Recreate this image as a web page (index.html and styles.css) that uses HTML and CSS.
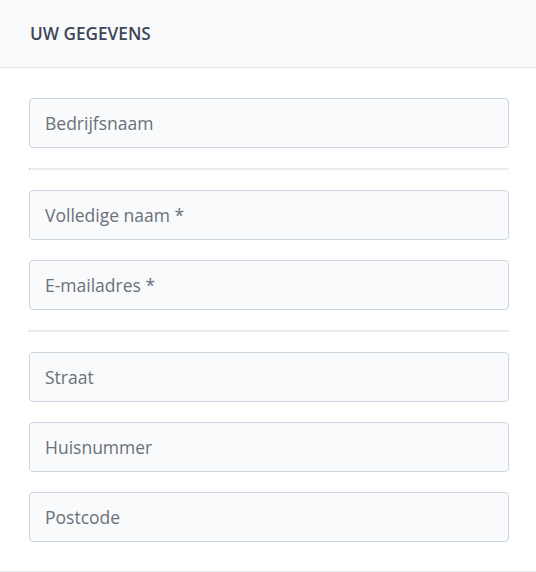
FILE: index.html
```html
<!DOCTYPE html>
<html lang="nl">
<head>
<meta charset="utf-8">
<title>Uw gegevens</title>
<link rel="stylesheet" href="styles.css">
</head>
<body>
<section class="card">
  <header class="card-header">UW GEGEVENS</header>
  <form class="card-body">
    <input class="field" type="text" placeholder="Bedrijfsnaam">
    <div class="divider"></div>
    <input class="field" type="text" placeholder="Volledige naam *">
    <input class="field" type="email" placeholder="E-mailadres *">
    <div class="divider"></div>
    <input class="field" type="text" placeholder="Straat">
    <input class="field" type="text" placeholder="Huisnummer">
    <input class="field" type="text" placeholder="Postcode">
  </form>
</section>
</body>
</html>
```

FILE: styles.css
```css
* { box-sizing: border-box; }
html, body { margin: 0; padding: 0; background: #ffffff; }
body { font-family: "Open Sans", "Noto Sans", sans-serif; }
.card {
  width: 536px;
  border-bottom: 1px solid #e2e8f0;
}
.card-header {
  height: 68px;
  padding: 0 30px 1px;
  display: flex;
  align-items: center;
  background: #f8fafc;
  border-bottom: 1px solid #e2e8f0;
  color: #3d4757;
  font-size: 17.2px;
  font-weight: 600;
}
.card-body {
  display: flex;
  flex-direction: column;
  gap: 20px;
  padding: 30px 27px 29px 29px;
  margin: 0;
}
.field {
  width: 480px;
  height: 50px;
  padding: 0 15px;
  border: 1px solid #cbd5e1;
  border-radius: 4px;
  background: #f8fafc;
  font-family: inherit;
  font-size: 17.5px;
  color: #334155;
  outline: none;
}
.field::placeholder { color: #6b7079; opacity: 1; }
.divider {
  height: 2px;
  width: 480px;
  background: #e9edf2;
  border-left: 1px solid #c8ced6;
}
```
